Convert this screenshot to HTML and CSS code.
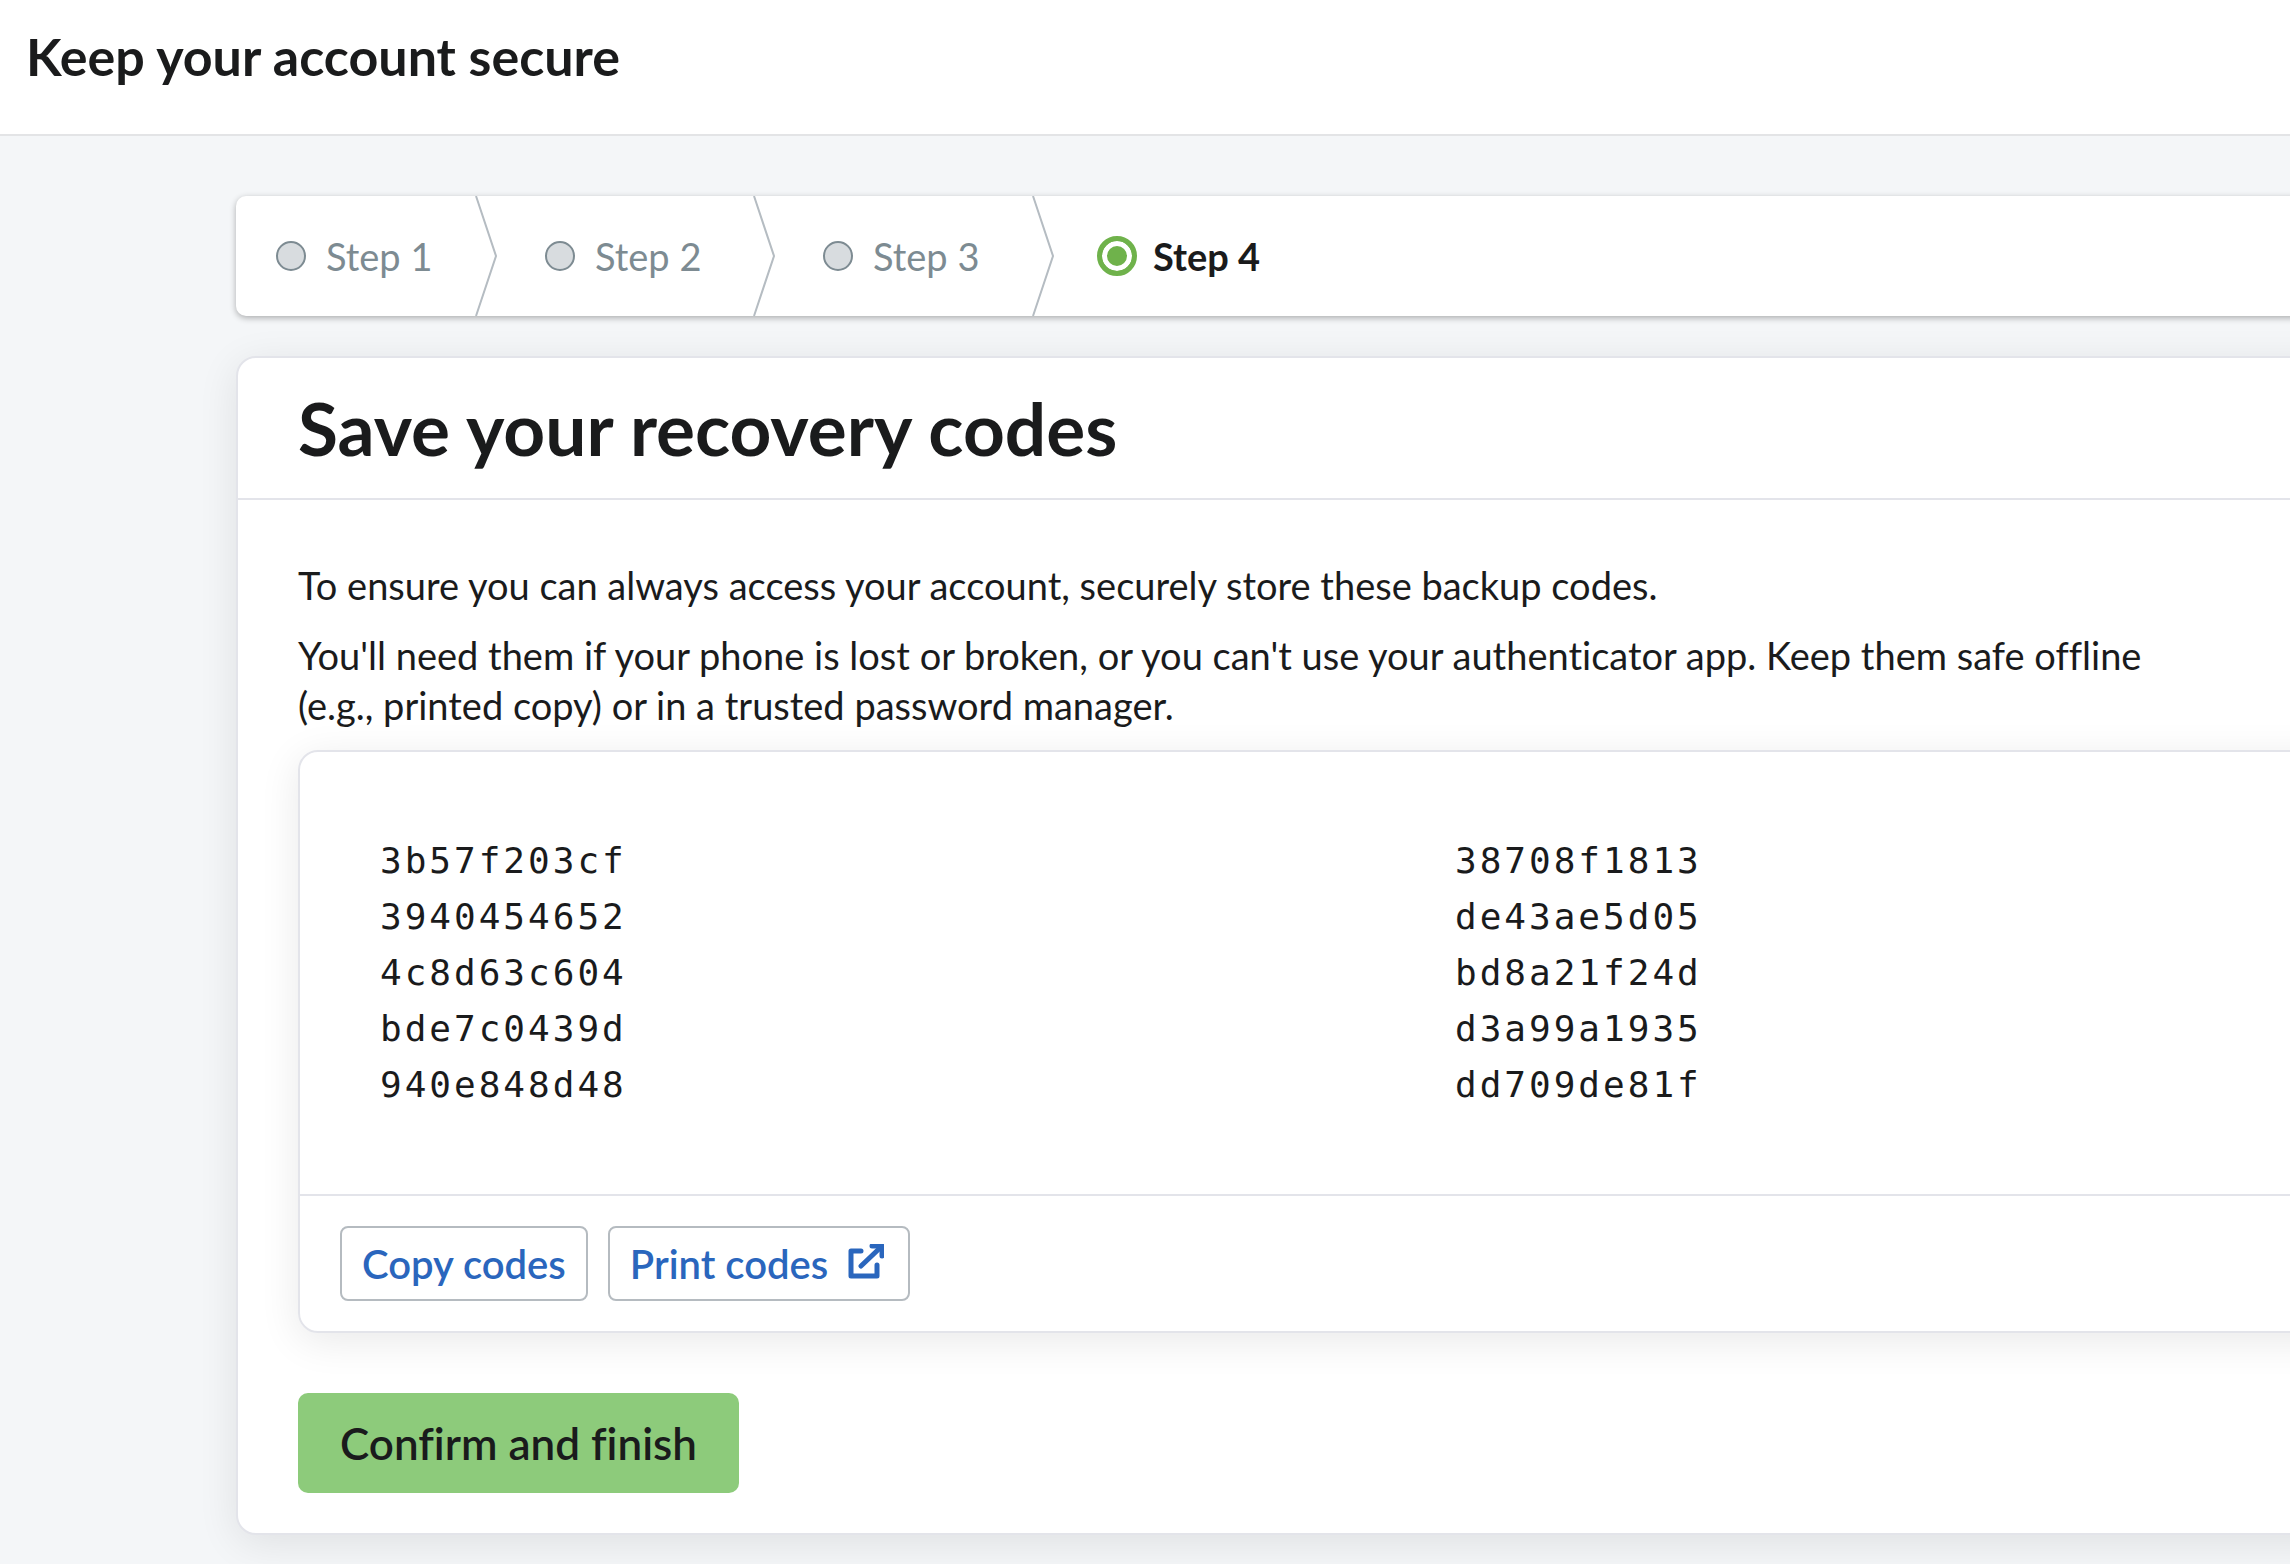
FILE: index.html
```html
<!DOCTYPE html>
<html lang="en">
<head>
    <meta charset="UTF-8">
    <meta name="viewport" content="width=device-width, initial-scale=1.0">
    <title>Keep your account secure</title>
    <link rel="stylesheet" href="styles.css">
</head>
<body>
    <header class="page-header">
        <h1>Keep your account secure</h1>
    </header>

    <main class="page-body">
        <div class="container">
            <ol class="steps">
                <li class="step">
                    <span class="dot"></span>Step 1
                    <svg class="divider" viewBox="0 0 22 120"><path d="M1 0L21 60L1 120"/></svg>
                </li>
                <li class="step">
                    <span class="dot"></span>Step 2
                    <svg class="divider" viewBox="0 0 22 120"><path d="M1 0L21 60L1 120"/></svg>
                </li>
                <li class="step">
                    <span class="dot"></span>Step 3
                    <svg class="divider" viewBox="0 0 22 120"><path d="M1 0L21 60L1 120"/></svg>
                </li>
                <li class="step active" aria-current="step">
                    <span class="dot"></span>Step 4
                </li>
            </ol>

            <section class="card">
                <h2>Save your recovery codes</h2>

                <div class="card-body">
                    <p>To ensure you can always access your account, securely store these backup codes.</p>
                    <p>You'll need them if your phone is lost or broken, or you can't use your authenticator app. Keep them safe offline (e.g., printed copy) or in a trusted password manager.</p>

                    <div class="codes-box">
                        <div class="codes">
                            <ul>
                                <li>3b57f203cf</li>
                                <li>3940454652</li>
                                <li>4c8d63c604</li>
                                <li>bde7c0439d</li>
                                <li>940e848d48</li>
                            </ul>
                            <ul>
                                <li>38708f1813</li>
                                <li>de43ae5d05</li>
                                <li>bd8a21f24d</li>
                                <li>d3a99a1935</li>
                                <li>dd709de81f</li>
                            </ul>
                        </div>
                        <div class="actions">
                            <button class="btn" type="button">Copy codes</button>
                            <button class="btn" type="button">Print codes
                                <svg class="icon" viewBox="0 0 36 36">
                                    <path d="M13 7H3V32H29V21"/>
                                    <path d="M13 22L33 3"/>
                                    <path d="M24 2H34V12"/>
                                </svg>
                            </button>
                        </div>
                    </div>

                    <button class="btn-confirm" type="button">Confirm and finish</button>
                </div>
            </section>
        </div>
    </main>
</body>
</html>
```
FILE: styles.css
```css
* { box-sizing: border-box; }
body { margin: 0; font-family: Lato, sans-serif; font-size: 38px; line-height: 50px; font-variant-ligatures: none; color: #1a1b1c; background: #f4f6f8; }
h1, h2, p, ul, ol { margin: 0; padding: 0; }
ul, ol { list-style: none; }

.page-header { padding: 26px 26px 48px; background: white; border-bottom: 2px solid #e3e4e6; }
h1 { font-size: 52px; line-height: 60px; font-weight: bold; }

/* the content column is wider than the window and runs off its right side */
.page-body { padding: 60px 0 30px 236px; overflow: hidden; }
.container { margin-right: -384px; }

.steps { display: grid; grid-template-columns: 261px 278px 279px 1fr; height: 120px; background: white; border-radius: 10px; box-shadow: 0 2px 6px rgba(0, 0, 0, 0.3); }
.step { display: flex; align-items: center; gap: 20px; padding-left: 48px; color: #7d8b92; }
.step:first-child { padding-left: 40px; }
.step.active { gap: 16px; padding-left: 43px; color: #1a1b1c; font-weight: bold; }
.dot { width: 30px; height: 30px; border: 2px solid #7d8b92; border-radius: 50%; background: #d8dcdf; }
.active .dot { width: 40px; height: 40px; border: 5px solid #6fb24b; background: #6fb24b; box-shadow: inset 0 0 0 5px white; }
.divider { width: 22px; height: 120px; margin-left: auto; fill: none; stroke: #b5bcc2; stroke-width: 2; }

.card { margin-top: 40px; background: white; border: 2px solid #e3e4ea; border-radius: 20px; box-shadow: 0 8px 40px rgba(0, 0, 0, 0.09); }
h2 { padding: 28px 60px; font-size: 73px; line-height: 84px; font-weight: bold; border-bottom: 2px solid #e3e4ea; }
.card-body { padding: 60px 60px 40px; }
.card-body p { max-width: 1880px; margin-bottom: 20px; }

.codes-box { border: 2px solid #e3e4ea; border-radius: 20px; box-shadow: 0 8px 40px rgba(0, 0, 0, 0.09); }
.codes { display: grid; grid-template-columns: 1fr 1fr; padding: 81px 80px; font-family: "DejaVu Sans Mono", monospace; font-size: 36px; line-height: 56px; letter-spacing: 3px; }
.actions { display: flex; gap: 20px; padding: 30px 40px; border-top: 2px solid #e3e4ea; }
.btn { display: flex; align-items: center; gap: 20px; height: 75px; padding: 0 20px; font: 600 40px Lato, sans-serif; color: #2a66bd; background: white; border: 2px solid #b5bbc0; border-radius: 8px; cursor: pointer; }
.icon { width: 36px; height: 36px; margin: 0 4px 4px 0; fill: none; stroke: #2a66bd; stroke-width: 5; stroke-linecap: round; stroke-linejoin: round; }
.btn-confirm { height: 100px; margin-top: 60px; padding: 0 42px; font: 600 44px Lato, sans-serif; font-variant-ligatures: none; color: #1a1b1c; background: #8dcb7b; border: none; border-radius: 10px; cursor: pointer; }
```
